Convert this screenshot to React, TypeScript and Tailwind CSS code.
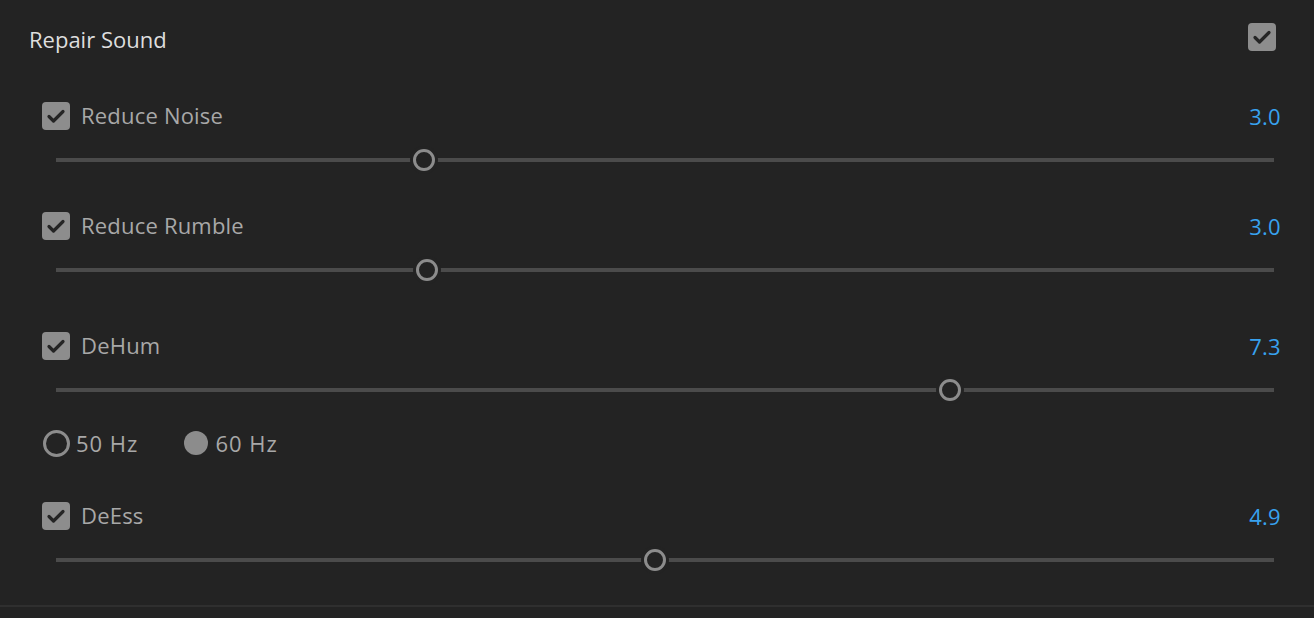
import React from 'react'

const Check = ({ className = '' }: { className?: string }) => (
  <span className={`flex items-center justify-center w-[28px] h-[28px] rounded-[4px] bg-[#8d8d8d] ${className}`}>
    <svg width="28" height="28" viewBox="0 0 28 28">
      <path d="M7 14.5 L11.5 19 L21 9.5" fill="none" stroke="#252525" strokeWidth="3.2" strokeLinecap="round" strokeLinejoin="round" />
    </svg>
  </span>
)

const Slider = ({ pos }: { pos: number }) => (
  <div className="relative h-[24px] ml-[56px] mr-[40px] flex items-center">
    <div className="h-[4px] w-full bg-[#4b4b4b]" />
    <div
      className="absolute top-1/2 -translate-x-1/2 -translate-y-1/2 w-[28px] h-[28px] rounded-full bg-[#232323] flex items-center justify-center"
      style={{ left: pos }}
    >
      <div className="w-[22px] h-[22px] rounded-full border-[3px] border-[#8c8c8c] bg-[#232323]" />
    </div>
  </div>
)

const EffectRow = ({ label, value }: { label: string; value: string }) => (
  <div className="flex items-center h-[28px] pl-[42px] pr-[33px]">
    <Check />
    <span className="ml-[11px] text-[22px] text-[#a8a8a8] tracking-[0.2px] leading-none -translate-y-[1px]">{label}</span>
    <span className="ml-auto text-[22px] text-[#38a2ef] tracking-[0.3px] leading-none">{value}</span>
  </div>
)

export default function App() {
  return (
    <div
      className="w-[1314px] h-[618px] bg-[#232323] overflow-hidden flex flex-col"
      style={{ fontFamily: '"Open Sans", "DejaVu Sans", sans-serif' }}
    >
      <div className="flex items-center justify-between pl-[29px] pr-[38px] pt-[23px]">
        <span className="text-[22px] text-[#dedede] leading-none translate-y-[2px]">Repair Sound</span>
        <Check />
      </div>

      <div className="mt-[51px]">
        <EffectRow label="Reduce Noise" value="3.0" />
        <div className="mt-[18px]"><Slider pos={368} /></div>
      </div>

      <div className="mt-[40px]">
        <EffectRow label="Reduce Rumble" value="3.0" />
        <div className="mt-[18px]"><Slider pos={371} /></div>
      </div>

      <div className="mt-[50px]">
        <EffectRow label="DeHum" value="7.3" />
        <div className="mt-[18px]"><Slider pos={894} /></div>
      </div>

      <div className="mt-[27px] flex items-center h-[28px] pl-[43px] text-[22px] text-[#a8a8a8] leading-none">
        <span className="w-[27px] h-[27px] rounded-full border-[3px] border-[#8c8c8c]" />
        <span className="ml-[6px] tracking-[1px]">50 Hz</span>
        <span className="ml-[46px] w-[24px] h-[24px] rounded-full bg-[#8c8c8c]" />
        <span className="ml-[7px] tracking-[1px]">60 Hz</span>
      </div>

      <div className="mt-[45px]">
        <EffectRow label="DeEss" value="4.9" />
        <div className="mt-[18px]"><Slider pos={599} /></div>
      </div>

      <div className="mt-[33px] h-[2px] bg-[#2f2f2f]" />
    </div>
  )
}
